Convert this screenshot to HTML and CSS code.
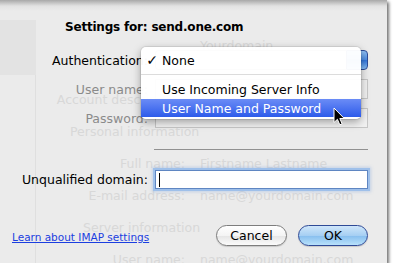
FILE: index.html
```html
<!DOCTYPE html>
<html lang="en">
<head>
    <meta charset="UTF-8">
    <meta name="viewport" content="width=device-width, initial-scale=1.0">
    <title>Settings for send.one.com</title>
    <link rel="stylesheet" href="styles.css">
</head>
<body>

<div class="sheet">
    <!-- the account window showing through the sheet -->
    <div class="backdrop">
        <div class="sidebar">
            <div class="side-top"></div>
            <div class="side-rest"></div>
        </div>
        <div class="ghost">
            <div></div><div>Yourdomain</div>
            <div></div><div></div>
            <div class="g-label">Account description:</div><div></div>
            <div class="g-head personal">Personal information</div>
            <div class="g-label">Full name:</div><div>Firstname Lastname</div>
            <div class="g-label">E-mail address:</div><div>name@yourdomain.com</div>
            <div class="g-head server">Server information</div>
            <div class="g-label">User name:</div><div>name@yourdomain.com</div>
        </div>
    </div>

    <div class="content">
        <h1 class="title">Settings for: send.one.com</h1>

        <div class="form">
            <div class="label">Authentication:</div>
            <div class="popup"><span class="popup-body"></span><span class="popup-arrow"></span></div>
            <div class="label disabled">User name:</div>
            <div class="field"></div>
            <div class="label disabled">Password:</div>
            <div class="field"></div>
        </div>

        <hr class="rule">

        <div class="form domain-row">
            <div class="label">Unqualified domain:</div>
            <div class="input"><span class="caret"></span></div>
        </div>

        <div class="footer">
            <a class="help" href="#">Learn about IMAP settings</a>
            <div class="buttons">
                <button class="btn">Cancel</button>
                <button class="btn default">OK</button>
            </div>
        </div>
    </div>

    <div class="menu">
        <div class="menu-item first"><span class="check">&#10003;</span><span>None</span></div>
        <div class="menu-sep"></div>
        <div class="menu-item"><span></span><span>Use Incoming Server Info</span></div>
        <div class="menu-item selected"><span></span><span>User Name and Password</span></div>
    </div>

    <svg class="pointer" width="13" height="20" viewBox="0 0 13 20">
        <path d="M1 1 L1 15.5 L4.4 12.3 L6.8 17.8 L9.1 16.8 L6.8 11.5 L11.3 11.5 Z" fill="#000" stroke="#fff" stroke-width="1" stroke-linejoin="round"/>
    </svg>
</div>

</body>
</html>
```

FILE: styles.css
```css
body {
    margin: 0;
    background: #fff;
    font-family: 'DejaVu Sans', sans-serif;
    font-size: 12.5px;
    color: #000;
}
.sheet {
    position: relative;
    width: 387px;
    height: 263px;
    background: linear-gradient(#a8a8a8, #e2e2e2 6px, #ebebeb 11px);
    box-shadow: 2px 2px 3px rgba(0, 0, 0, 0.55);
}
.backdrop {
    position: absolute;
    inset: 0;
    display: grid;
    grid-template-columns: 36px 1fr;
}
.sidebar {
    display: flex;
    flex-direction: column;
    padding-top: 20px;
}
.side-top {
    height: 55px;
    background: #e3e3e3;
}
.side-rest {
    flex: 1;
    border-right: 1px solid #dfdfdf;
}
.ghost {
    display: grid;
    grid-template-columns: 149px 1fr;
    grid-template-rows: 32px 22px repeat(6, 32px);
    column-gap: 15px;
    align-items: center;
    padding-top: 29px;
    color: #d8d8d8;
    white-space: nowrap;
}
.g-label {
    text-align: right;
}
.g-head {
    grid-column: 1 / 3;
}
.personal {
    padding-left: 34px;
}
.server {
    padding-left: 47px;
}
.content {
    position: relative;
    padding: 19px 19px 0 0;
}
.title {
    margin: 0 0 15px 65px;
    font-size: 12px;
    font-weight: bold;
    line-height: 16px;
    letter-spacing: -0.2px;
}
.form {
    display: grid;
    grid-template-columns: 148px 1fr;
    grid-auto-rows: 20px;
    column-gap: 7px;
    row-gap: 9px;
    align-items: center;
}
.label {
    text-align: right;
    white-space: nowrap;
}
.label.disabled {
    color: #8a8a8a;
}
.popup {
    display: flex;
    height: 20px;
}
.popup-body {
    flex: 1;
    background: #fff;
    border: 1px solid #9a9a9a;
    border-right: none;
    border-radius: 4px 0 0 4px;
}
.popup-arrow {
    width: 20px;
    background: linear-gradient(#8fc0f3, #4b8be2 50%, #2f72d8 50%, #86bdf5);
    border: 1px solid #2d4c98;
    border-radius: 0 4px 4px 0;
}
.field {
    height: 20px;
    box-sizing: border-box;
    background: #f1f1f1;
    border: 1px solid #c6c6c6;
}
.rule {
    margin: 21px 0 0 154px;
    border: 0;
    border-top: 1px solid #919191;
    height: 0;
}
.domain-row {
    margin-top: 20px;
    grid-auto-rows: 19px;
}
.input {
    display: flex;
    align-items: center;
    height: 19px;
    box-sizing: border-box;
    background: #fff;
    border: 1px solid #5f86c2;
    box-shadow: 0 0 0 2px #9fc0ea, 0 0 3px 3px rgba(120, 160, 220, 0.35);
}
.caret {
    width: 1px;
    height: 14px;
    margin-left: 3px;
    background: #000;
}
.footer {
    display: flex;
    justify-content: space-between;
    margin-top: 36px;
    padding-left: 12px;
}
.help {
    align-self: flex-end;
    margin-bottom: 2px;
    font-size: 10.5px;
    line-height: 14px;
    color: #1b3ee0;
}
.buttons {
    display: flex;
    gap: 11px;
}
.btn {
    width: 71px;
    height: 21px;
    padding: 0;
    font-family: 'DejaVu Sans', sans-serif;
    font-size: 12.5px;
    color: #000;
    border: 1px solid #7d7d7d;
    border-radius: 11px;
    background: linear-gradient(#ffffff, #f4f4f4 50%, #e4e4e4 50%, #fbfbfb);
    box-shadow: 0 1px 1px rgba(0, 0, 0, 0.15);
}
.btn.default {
    width: 70px;
    border-color: #2f4a96;
    background: linear-gradient(#cfe6fa, #a6cff3 50%, #85bdee 50%, #b8e1fb);
}
.menu {
    position: absolute;
    left: 141px;
    top: 47px;
    width: 220px;
    padding: 3px 0 2px;
    background: rgba(255, 255, 255, 0.97);
    border-radius: 5px;
    box-shadow: 0 3px 9px rgba(0, 0, 0, 0.35), 0 0 0 1px rgba(0, 0, 0, 0.07);
}
.menu-item {
    display: grid;
    grid-template-columns: 21px 1fr;
    height: 19px;
    align-items: center;
    white-space: nowrap;
}
.menu-item.first {
    height: 20px;
}
.menu-item.selected {
    height: 18px;
    color: #fff;
    background: linear-gradient(#6b8cf6, #2d5bea);
}
.check {
    justify-self: end;
    padding-right: 4px;
    font-size: 14px;
    line-height: 16px;
}
.menu-sep {
    height: 1px;
    margin: 4px 0 5px;
    background: #dcdcdc;
}
.pointer {
    position: absolute;
    left: 333px;
    top: 107px;
}
```
